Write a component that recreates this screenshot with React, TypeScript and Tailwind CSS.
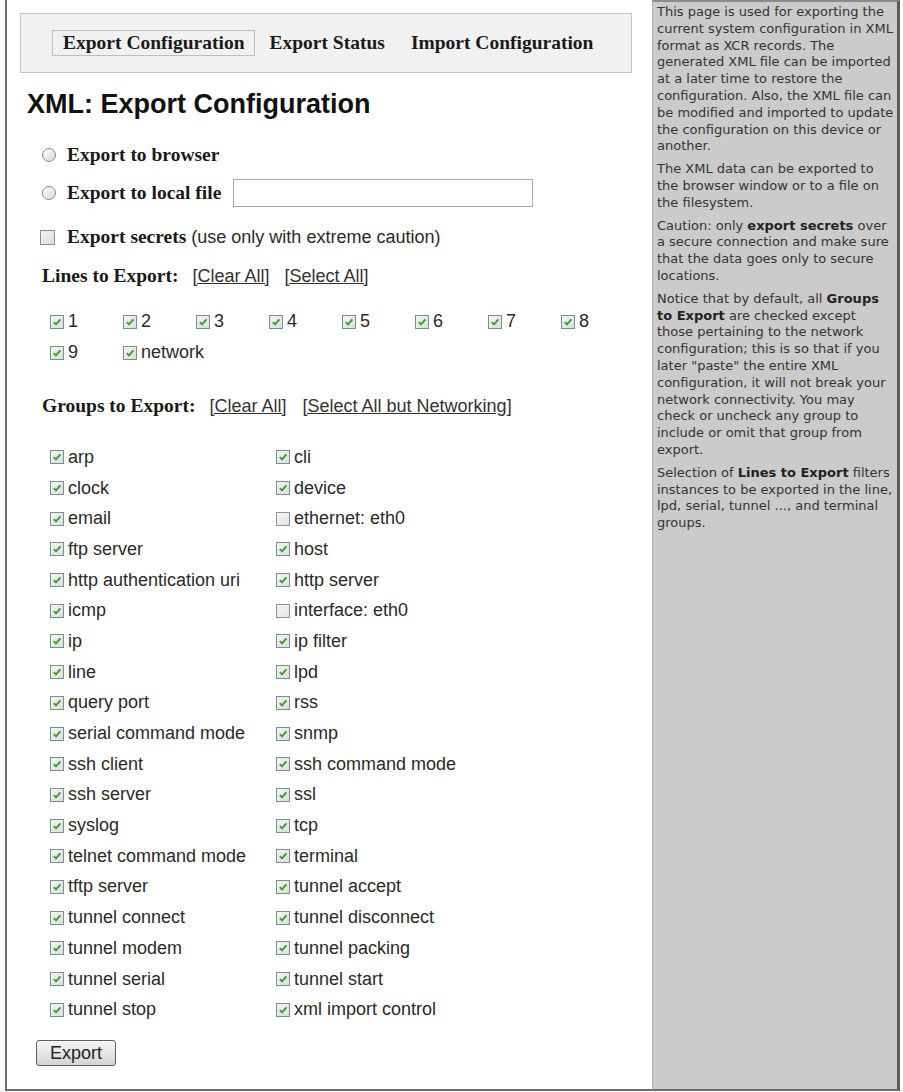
import React from 'react';

const serif = "font-['Liberation_Serif','Times_New_Roman',serif]";

const leftGroups: [string, boolean][] = [
  ['arp', true],
  ['clock', true],
  ['email', true],
  ['ftp server', true],
  ['http authentication uri', true],
  ['icmp', true],
  ['ip', true],
  ['line', true],
  ['query port', true],
  ['serial command mode', true],
  ['ssh client', true],
  ['ssh server', true],
  ['syslog', true],
  ['telnet command mode', true],
  ['tftp server', true],
  ['tunnel connect', true],
  ['tunnel modem', true],
  ['tunnel serial', true],
  ['tunnel stop', true],
];

const rightGroups: [string, boolean][] = [
  ['cli', true],
  ['device', true],
  ['ethernet: eth0', false],
  ['host', true],
  ['http server', true],
  ['interface: eth0', false],
  ['ip filter', true],
  ['lpd', true],
  ['rss', true],
  ['snmp', true],
  ['ssh command mode', true],
  ['ssl', true],
  ['tcp', true],
  ['terminal', true],
  ['tunnel accept', true],
  ['tunnel disconnect', true],
  ['tunnel packing', true],
  ['tunnel start', true],
  ['xml import control', true],
];

function Box({ checked, big }: { checked: boolean; big?: boolean }) {
  return (
    <span
      className={
        'inline-flex shrink-0 items-center justify-center border ' +
        (big
          ? 'h-[15px] w-[15px] border-[#8c8c8c] bg-gradient-to-br from-[#f4f4f4] to-[#dcdcdc]'
          : checked
            ? 'h-[14px] w-[14px] border-[#7d8c99] bg-gradient-to-br from-[#f3f7f1] to-[#d6e2d3]'
            : 'h-[14px] w-[14px] border-[#8c959c] bg-gradient-to-br from-[#f6f6f6] to-[#dfe2e4]')
      }
    >
      {checked && (
        <svg viewBox="0 0 10 10" className="h-[10px] w-[10px]">
          <path d="M1.8 5.2 L4 7.4 L8.4 2.4" fill="none" stroke="#3f9a2f" strokeWidth="1.9" />
        </svg>
      )}
    </span>
  );
}

function Radio() {
  return (
    <span className="inline-block h-[14px] w-[14px] shrink-0 rounded-full border border-[#8a8a8a] bg-gradient-to-br from-white to-[#d6d6d6]" />
  );
}

function Check({ label, checked = true }: { label: string; checked?: boolean }) {
  return (
    <div className="flex items-center gap-[4px]">
      <Box checked={checked} />
      <span>{label}</span>
    </div>
  );
}

export default function App() {
  return (
    <div className="flex h-[1092px] w-[903px] bg-white font-['Liberation_Sans',Arial,sans-serif] text-[#2a2a2a]">
      {/* main form */}
      <div className="ml-[5px] mb-[1px] flex w-[647px] flex-col border-b-2 border-l-2 border-[#6f6f6f]">
        <div className="ml-[13px] mt-[13px] flex h-[60px] w-[612px] items-center border border-[#c4c4c4] bg-[#f1f1f1] pl-[31px]">
          <span className={`${serif} border border-[#bdbdbd] px-[10px] py-[1px] text-[19.5px] font-bold leading-[22px] text-[#1a1a1a]`}>
            Export Configuration
          </span>
          <span className={`${serif} ml-[14px] text-[19.5px] font-bold leading-[22px] text-[#1a1a1a]`}>Export Status</span>
          <span className={`${serif} ml-[26px] text-[19.5px] font-bold leading-[22px] text-[#1a1a1a]`}>
            Import Configuration
          </span>
        </div>

        <h1 className="ml-[20px] mt-[15px] text-[27px] font-bold leading-[32px] text-[#111]">XML: Export Configuration</h1>

        <div className={`${serif} ml-[35px] mt-[20px] flex h-[30px] items-center gap-[11px] text-[19.5px] font-bold text-[#1a1a1a]`}>
          <Radio />
          <span>Export to browser</span>
        </div>
        <div className={`${serif} ml-[35px] mt-[8px] flex h-[30px] items-center gap-[11px] text-[19.5px] font-bold text-[#1a1a1a]`}>
          <Radio />
          <span>Export to local file</span>
          <input className="ml-[1px] h-[28px] w-[300px] border border-[#a9a9a9] bg-white" />
        </div>

        <div className="ml-[33px] mt-[14px] flex h-[30px] items-center gap-[12px] text-[18px]">
          <Box checked={false} big />
          <span>
            <span className={`${serif} text-[19.5px] font-bold text-[#1a1a1a]`}>Export secrets</span> (use only with extreme
            caution)
          </span>
        </div>

        <div className="ml-[35px] mt-[9px] flex h-[30px] items-center text-[18px]">
          <span className={`${serif} text-[19.5px] font-bold text-[#1a1a1a]`}>Lines to Export:</span>
          <a className="ml-[14px] text-[#333] underline">[Clear All]</a>
          <a className="ml-[15px] text-[#333] underline">[Select All]</a>
        </div>

        <div className="ml-[43px] mt-[15px] grid grid-cols-[repeat(8,73px)] auto-rows-[31px] items-center text-[18px]">
          {['1', '2', '3', '4', '5', '6', '7', '8', '9', 'network'].map((n) => (
            <Check key={n} label={n} />
          ))}
        </div>

        <div className="ml-[35px] mt-[23px] flex h-[30px] items-center text-[18px]">
          <span className={`${serif} text-[19.5px] font-bold text-[#1a1a1a]`}>Groups to Export:</span>
          <a className="ml-[14px] text-[#333] underline">[Clear All]</a>
          <a className="ml-[16px] text-[#333] underline">[Select All but Networking]</a>
        </div>

        <div className="ml-[43px] mt-[21px] grid grid-cols-[226px_1fr] auto-rows-[30.7px] items-center text-[18px]">
          {leftGroups.map(([l, c], i) => (
            <React.Fragment key={l}>
              <Check label={l} checked={c} />
              <Check label={rightGroups[i][0]} checked={rightGroups[i][1]} />
            </React.Fragment>
          ))}
        </div>

        <div className="ml-[29px] mt-[15px]">
          <button className="h-[26px] w-[80px] rounded-[3px] border border-[#5f5f5f] bg-gradient-to-b from-[#f7f7f7] to-[#d4d4d4] text-[18px] leading-none text-[#222]">
            Export
          </button>
        </div>
      </div>

      {/* help panel */}
      <div className="mb-[1px] w-[248px] border-r-[3px] border-t-2 border-b-2 border-l border-r-[#5a5a5a] border-t-[#8a8a8a] border-b-[#6f6f6f] border-l-[#b0b0b0] bg-[#cbcbcb] pl-[4px] pr-[2px] pt-[2px] font-['DejaVu_Sans',Verdana,sans-serif] text-[13px] leading-[16.8px] text-[#333]">
        <p>
          This page is used for exporting the current system configuration in XML format as XCR records. The generated XML
          file can be imported at a later time to restore the configuration. Also, the XML file can be modified and
          imported to update the configuration on this device or another.
        </p>
        <p className="mt-[6px]">The XML data can be exported to the browser window or to a file on the filesystem.</p>
        <p className="mt-[6px]">
          Caution: only <b className="text-[#222]">export secrets</b> over a secure connection and make sure that the data
          goes only to secure locations.
        </p>
        <p className="mt-[6px]">
          Notice that by default, all <b className="text-[#222]">Groups to Export</b> are checked except those pertaining to
          the network configuration; this is so that if you later "paste" the entire XML configuration, it will not break
          your network connectivity. You may check or uncheck any group to include or omit that group from export.
        </p>
        <p className="mt-[6px]">
          Selection of <b className="text-[#222]">Lines to Export</b> filters instances to be exported in the line, lpd,
          serial, tunnel ..., and terminal groups.
        </p>
      </div>
    </div>
  );
}
